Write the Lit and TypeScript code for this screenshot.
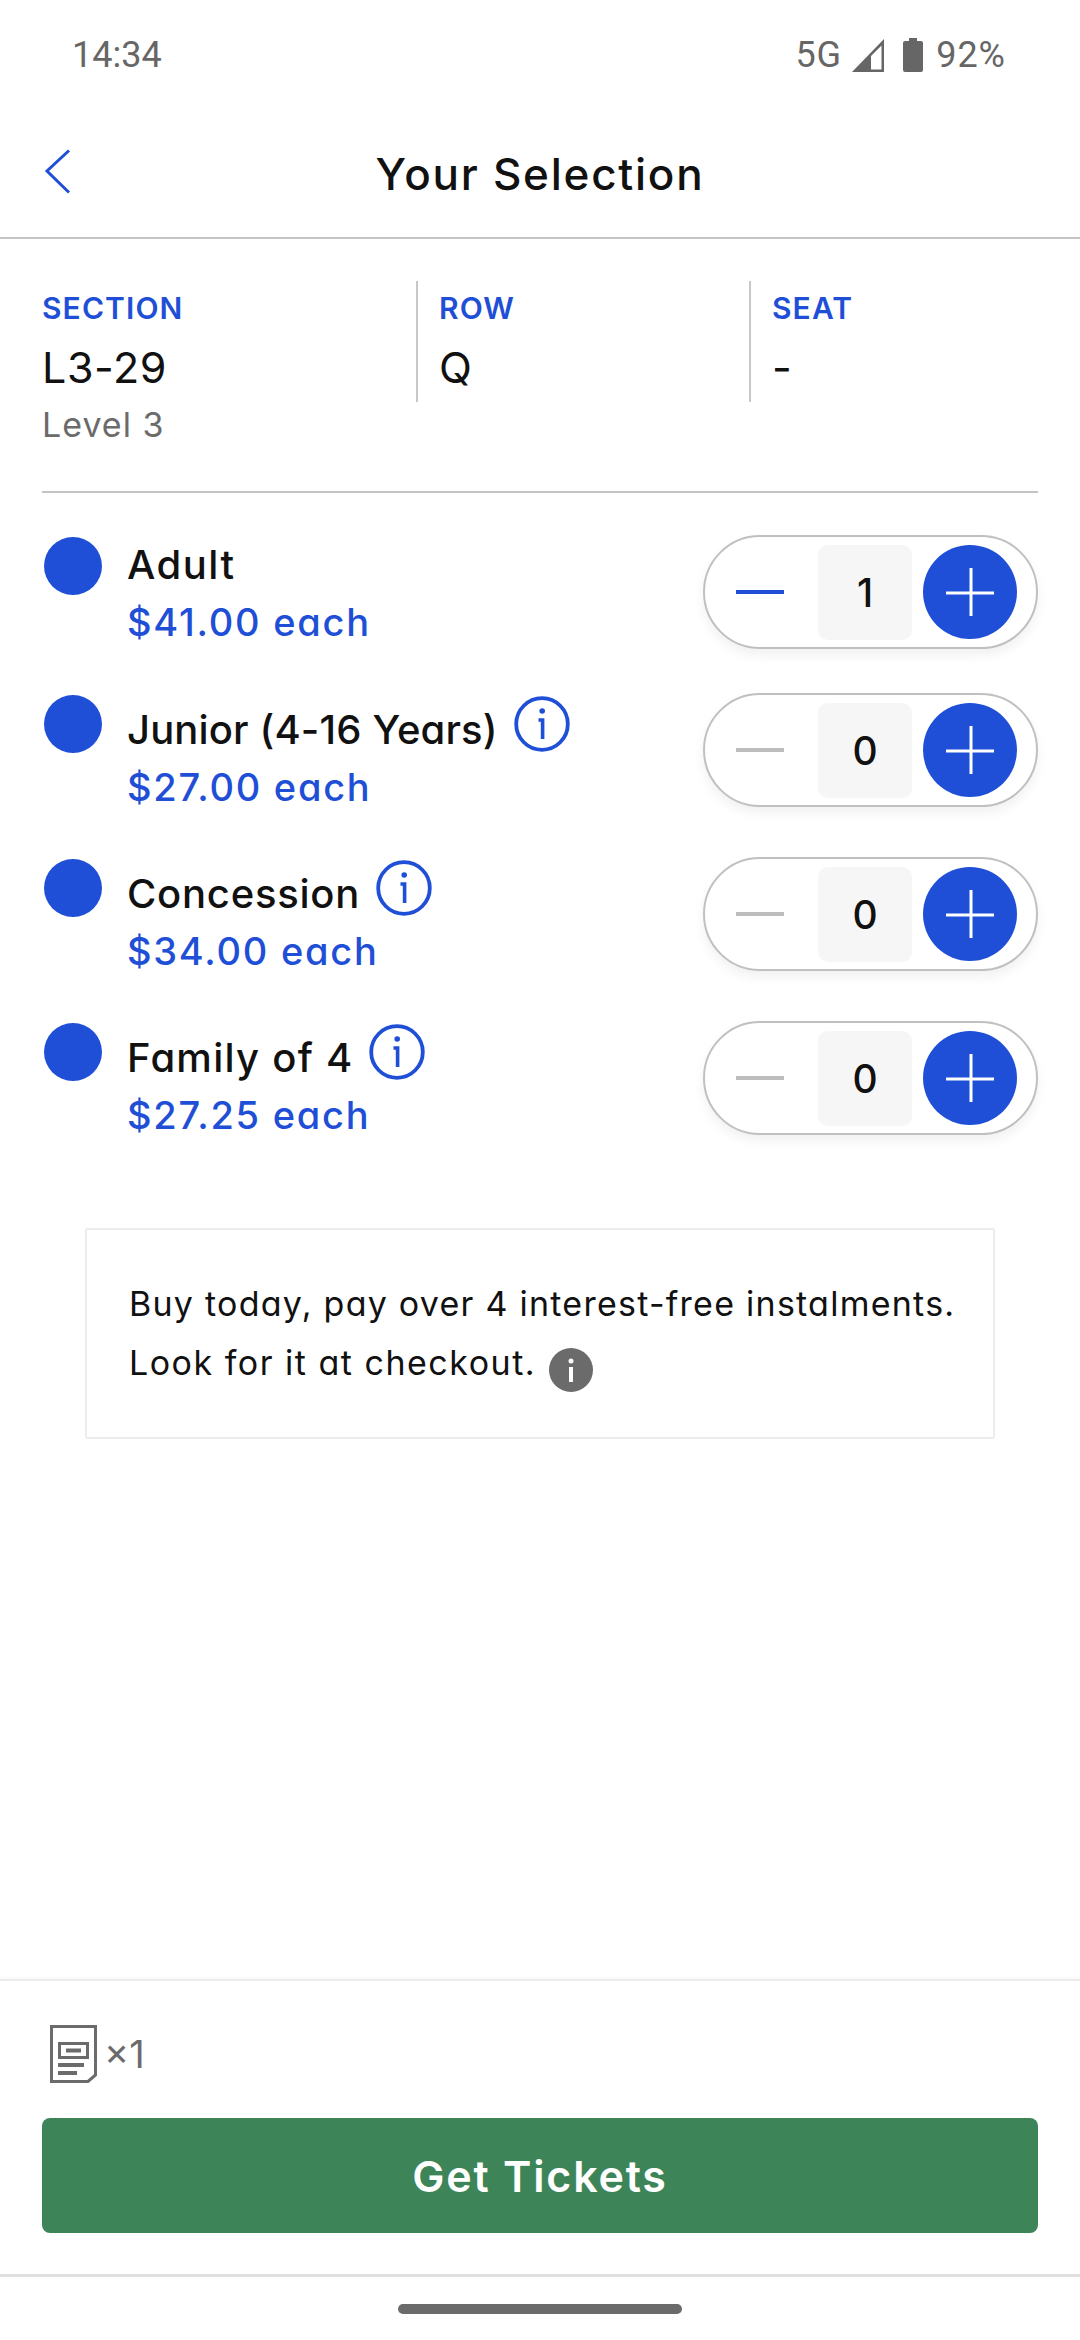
import { LitElement, html, css } from "lit";
import { customElement } from "lit/decorators.js";

const rows = [
  { name: "Adult", price: "$41.00 each", count: 1, info: false, track: 1.5 },
  { name: "Junior (4-16 Years)", price: "$27.00 each", count: 0, info: true, track: 0.15 },
  { name: "Concession", price: "$34.00 each", count: 0, info: true, track: 0.75 },
  { name: "Family of 4", price: "$27.25 each", count: 0, info: true, track: 1.25 },
];

const infoIcon = html`<svg class="info" viewBox="0 0 56 56" fill="none" stroke="#1f4fd6">
  <circle cx="28" cy="28" r="25.8" stroke-width="3.8"></circle>
  <path d="M24.5 24H28.6V43" stroke-width="3.6"></path>
  <circle cx="28.2" cy="15" r="2.8" fill="#1f4fd6" stroke="none"></circle>
</svg>`;

@customElement("app-root")
export class AppRoot extends LitElement {
  static styles = css`
    :host {
      display: flex;
      flex-direction: column;
      width: 1080px;
      height: 2340px;
      background: #fff;
      color: #111;
      font-family: Inter, "Noto Sans", sans-serif;
      font-feature-settings: "cv11" 1;
      overflow: hidden;
    }
    .status {
      height: 108px;
      flex: none;
      display: flex;
      align-items: center;
      justify-content: space-between;
      padding: 2px 74px 0 72px;
      box-sizing: border-box;
      font-family: Roboto, sans-serif;
      font-size: 36px;
      color: #666;
      font-feature-settings: normal;
    }
    .status .right { display: flex; align-items: center; letter-spacing: 1px; }
    .signal { width: 32px; height: 33px; margin: 0 19px 0 10px; }
    .battery { width: 20px; height: 34px; margin-right: 13px; }
    .header {
      height: 131px;
      flex: none;
      box-sizing: border-box;
      border-bottom: 2px solid #c4c4c4;
      display: flex;
      align-items: center;
      justify-content: center;
      position: relative;
      font-size: 44px;
      font-weight: 500;
      letter-spacing: 1.75px;
      padding-top: 2px;
    }
    .back { position: absolute; left: 44px; top: 41px; width: 27px; height: 45px; }
    .seat {
      margin: 0 42px;
      padding-top: 42px;
      border-bottom: 2px solid #c4c4c4;
      flex: none;
      height: 254px;
      box-sizing: border-box;
    }
    .cols { display: flex; height: 121px; }
    .col { box-sizing: border-box; padding-left: 21px; border-left: 2px solid #c8c8c8; }
    .col:nth-child(1) { width: 374px; padding-left: 0; border-left: none; }
    .col:nth-child(2) { width: 333px; }
    .label {
      color: #1f4fd6;
      font-size: 30px;
      font-weight: 600;
      line-height: 36px;
      letter-spacing: 1.1px;
      margin-top: 9px;
    }
    .value { font-size: 43px; line-height: 50px; margin-top: 16px; letter-spacing: 0.6px; }
    .level { font-size: 34px; line-height: 44px; color: #6b6b6b; margin-top: 1px; letter-spacing: 1px; }
    .list { padding: 42px 42px 0; flex: none; }
    .row { display: flex; align-items: flex-start; margin-bottom: 44px; }
    .dot {
      width: 58px;
      height: 58px;
      border-radius: 50%;
      background: #1f4fd6;
      flex: none;
      margin: 2px 25px 0 2px;
    }
    .text { flex: 1; padding: 2px 0; }
    .row.has-info .text { padding: 3px 0 1px; }
    .name-line { display: flex; align-items: flex-start; height: 60px; }
    .row.has-info .name-line { height: 66px; }
    .name { font-size: 40px; font-weight: 500; line-height: 50px; white-space: nowrap; padding-top: 3px; }
    .row.has-info .name { padding-top: 9px; }
    .info { width: 56px; height: 56px; flex: none; margin-left: 16px; }
    .price {
      font-size: 38px;
      font-weight: 500;
      color: #1f4fd6;
      line-height: 50px;
      letter-spacing: 1.75px;
    }
    .stepper {
      box-sizing: border-box;
      width: 335px;
      height: 114px;
      flex: none;
      border: 2px solid #c0c0c0;
      border-radius: 57px;
      background: #fff;
      box-shadow: 0 6px 12px rgba(0, 0, 0, 0.06);
      display: flex;
      align-items: center;
      padding-left: 31px;
    }
    .minus { width: 48px; height: 4px; background: #bdbdbd; flex: none; }
    .minus.on { background: #1f4fd6; }
    .count {
      width: 94px;
      height: 95px;
      margin-left: 34px;
      border-radius: 10px;
      background: #f6f6f6;
      display: flex;
      align-items: center;
      justify-content: center;
      font-size: 39px;
      font-weight: 500;
      flex: none;
    }
    .plus { width: 94px; height: 94px; margin-left: 11px; flex: none; }
    .notice {
      margin: 43px 85px 0;
      height: 211px;
      box-sizing: border-box;
      border: 2px solid #ececec;
      border-radius: 2px;
      padding: 44px 0 0 42px;
      font-size: 34px;
      line-height: 59px;
      letter-spacing: 1.25px;
      flex: none;
      white-space: nowrap;
    }
    .second { letter-spacing: 1.5px; }
    .dark-i { width: 44px; height: 44px; vertical-align: -17px; margin-left: 2px; }
    .footer {
      margin-top: auto;
      border-top: 2px solid #ececec;
      box-shadow: 0 -2px 4px rgba(0, 0, 0, 0.03);
      height: 298px;
      box-sizing: border-box;
      flex: none;
      padding: 44px 42px 0;
      border-bottom: 3px solid #e0e0e0;
      margin-bottom: 63px;
    }
    .tickets {
      display: flex;
      align-items: center;
      height: 58px;
      padding-left: 8px;
      color: #6b6b6b;
      font-size: 38px;
    }
    .doc { width: 47px; height: 58px; margin-right: 7px; }
    .buy {
      margin-top: 35px;
      height: 115px;
      border-radius: 8px;
      background: #3d8558;
      color: #fff;
      display: flex;
      align-items: center;
      justify-content: center;
      font-size: 43px;
      font-weight: 600;
      letter-spacing: 1.8px;
    }
    .pill {
      position: absolute;
      left: 398px;
      top: 2304px;
      width: 284px;
      height: 10px;
      border-radius: 5px;
      background: #6b6b6b;
    }
  `;

  render() {
    return html`
      <div class="status">
        <span class="time">14:34</span>
        <span class="right">
          <span>5G</span>
          <svg class="signal" viewBox="0 0 32 33" fill="#666">
            <path fill-rule="evenodd" d="M32 0V33H0ZM29.5 6.5 19 17V30.5H29.5Z"></path>
          </svg>
          <svg class="battery" viewBox="0 0 20 34" fill="#666">
            <path d="M6 0H14V3H18Q20 3 20 5V32Q20 34 18 34H2Q0 34 0 32V5Q0 3 2 3H6Z"></path>
          </svg>
          <span>92%</span>
        </span>
      </div>
      <div class="header">
        <svg class="back" viewBox="0 0 27 45" fill="none" stroke="#1f4fd6" stroke-width="3">
          <path d="M25 1.5 3 22 25 43.5"></path>
        </svg>
        Your Selection
      </div>
      <div class="seat">
        <div class="cols">
          <div class="col"><div class="label">SECTION</div><div class="value">L3-29</div></div>
          <div class="col"><div class="label">ROW</div><div class="value">Q</div></div>
          <div class="col"><div class="label">SEAT</div><div class="value">-</div></div>
        </div>
        <div class="level">Level 3</div>
      </div>
      <div class="list">
        ${rows.map(
          (r) => html`<div class="row ${r.info ? "has-info" : ""}">
            <div class="dot"></div>
            <div class="text">
              <div class="name-line">
                <span class="name" style="letter-spacing:${r.track}px">${r.name}</span>
                ${r.info ? infoIcon : ""}
              </div>
              <div class="price">${r.price}</div>
            </div>
            <div class="stepper">
              <div class="minus ${r.count > 0 ? "on" : ""}"></div>
              <div class="count">${r.count}</div>
              <svg class="plus" viewBox="0 0 94 94">
                <circle cx="47" cy="47" r="47" fill="#1f4fd6"></circle>
                <path d="M23 48H71M48 23V71" stroke="#fff" stroke-width="3" fill="none"></path>
              </svg>
            </div>
          </div>`
        )}
      </div>
      <div class="notice">
        Buy today, pay over 4 interest-free instalments.<br />
        <span class="second">Look for it at checkout.</span>
        <svg class="dark-i" viewBox="0 0 44 44">
          <circle cx="22" cy="22" r="22" fill="#6b6b6b"></circle>
          <rect x="20" y="19" width="4" height="15" fill="#fff"></rect>
          <circle cx="22" cy="13" r="2.5" fill="#fff"></circle>
        </svg>
      </div>
      <div class="footer">
        <div class="tickets">
          <svg class="doc" viewBox="0 0 47 58" fill="none" stroke="#6b6b6b">
            <path d="M1.5 1.5H45.5V50L38 56.5H1.5Z" stroke-width="3"></path>
            <rect x="9.5" y="18.5" width="28" height="14" stroke-width="3"></rect>
            <path d="M16 25.5H31" stroke-width="4"></path>
            <path d="M8 40H34M8 48H27" stroke-width="4"></path>
          </svg>
          ×1
        </div>
        <div class="buy">Get Tickets</div>
      </div>
      <div class="pill"></div>
    `;
  }
}
